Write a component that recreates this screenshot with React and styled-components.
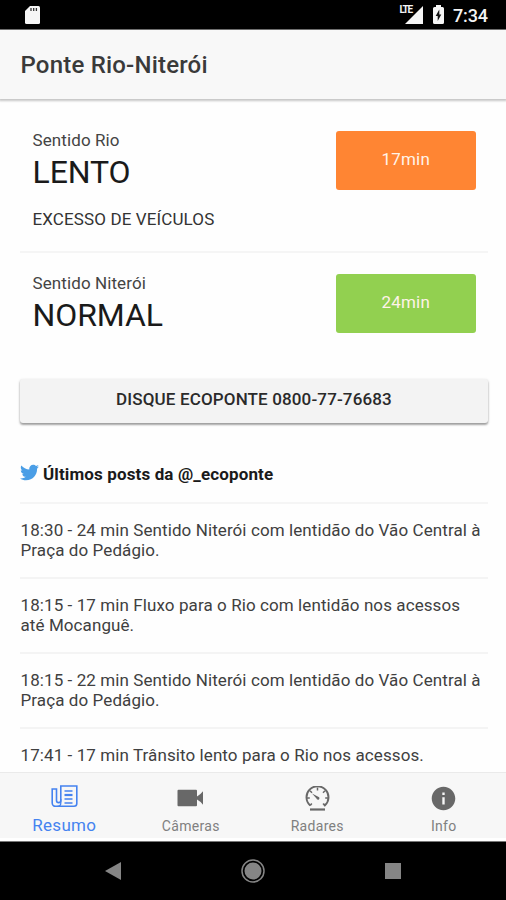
import React from 'react'
import styled, { createGlobalStyle } from 'styled-components'
import { IoMdInformationCircle } from 'react-icons/io'
import { FaTwitter } from 'react-icons/fa'

const GlobalStyle = createGlobalStyle`
  * {
    box-sizing: border-box;
  }

  body {
    margin: 0;
    background: #fefefe;
    color: #111;
    font-family: Roboto, 'Liberation Sans', sans-serif;
  }

  svg {
    display: block;
  }
`

const Screen = styled.div`
  display: flex;
  flex-direction: column;
  width: 506px;
  height: 900px;
  overflow: hidden;
`

const StatusBar = styled.div`
  flex: none;
  display: flex;
  align-items: center;
  height: 30px;
  padding: 0 18px 0 24px;
  background: #000;
  border-bottom: 1px solid #777;
  color: #f4f4f4;
`

const StatusIcons = styled.div`
  display: flex;
  align-items: center;
  margin-left: auto;
`

const Battery = styled.div`
  margin-left: 10px;
`

const Clock = styled.span`
  margin-left: 9px;
  padding-top: 3px;
  font-size: 18px;
  font-weight: 500;
  line-height: 20px;
  letter-spacing: -0.1px;
`

const Header = styled.header`
  flex: none;
  display: flex;
  align-items: center;
  height: 69px;
  padding: 0 20.5px;
  background: #f8f8f8;
  box-shadow: 0 1px 2px 1px rgba(0, 0, 0, 0.22);
`

const Title = styled.h1`
  margin: 0;
  font-size: 24px;
  font-weight: 500;
  line-height: 28px;
  color: #3a3a3a;
  letter-spacing: 0.2px;
`

const Content = styled.main`
  flex: 1;
  min-height: 0;
  overflow: hidden;
  padding: 0 18px 0 20px;
`

const Direction = styled.section`
  display: flex;
  justify-content: space-between;
  height: ${({ $height }) => $height}px;
  padding: ${({ $top }) => $top}px 12.5px 0 12.5px;
  border-bottom: ${({ $divided }) => ($divided ? '2px solid #f5f5f5' : 'none')};
`

const Label = styled.div`
  font-size: 17px;
  line-height: 20px;
  letter-spacing: 0.1px;
  color: #444;
`

const Status = styled.div`
  margin-top: 2px;
  font-size: 32px;
  line-height: 40px;
  letter-spacing: -0.1px;
  color: #1a1a1a;
`

const Reason = styled.div`
  margin-top: 17px;
  font-size: 17px;
  line-height: 20px;
  letter-spacing: 0.12px;
  color: #333;
`

const TimeBadge = styled.div`
  display: flex;
  align-items: center;
  justify-content: center;
  width: 139.5px;
  height: 59px;
  margin-top: 0.5px;
  padding-bottom: 3px;
  border-radius: 3px;
  background: ${({ $color }) => $color};
  color: #fff3e8;
  font-size: 17px;
  letter-spacing: 0.2px;
`

const CallButton = styled.button`
  display: block;
  width: 100%;
  height: 44px;
  padding: 0 0 4px;
  border: 0;
  border-radius: 3px;
  background: #f3f3f3;
  box-shadow: 0 2px 2px 0 rgba(0, 0, 0, 0.28), 0 1px 3px 0 rgba(0, 0, 0, 0.2);
  color: #2a2a2a;
  font-family: inherit;
  font-size: 17px;
  font-weight: 500;
  letter-spacing: 0.14px;
`

const PostsTitle = styled.h2`
  display: flex;
  align-items: center;
  height: 81px;
  margin: 0;
  padding-top: 23px;
  border-bottom: 2px solid #f5f5f5;
  font-size: 17px;
  font-weight: 700;
  line-height: 20px;
  letter-spacing: 0.13px;
  color: #1a1a1a;

  svg {
    margin: -3px 4px 0 0;
    color: #4a9ee6;
  }
`

const Post = styled.p`
  height: 75px;
  margin: 0;
  padding: 16px 0 0 0.5px;
  border-bottom: 2px solid #f4f4f4;
  font-size: 17px;
  line-height: 20px;
  letter-spacing: 0.09px;
  color: #404040;
`

const TabBar = styled.nav`
  flex: none;
  display: flex;
  height: 69px;
  margin-right: -1px;
  padding-left: 1px;
  background: #f7f7f7;
  border-top: 1px solid #eaeaea;
  border-bottom: 3px solid #fff;
`

const Tab = styled.div`
  flex: 1;
  display: flex;
  flex-direction: column;
  align-items: center;
  color: ${({ $active }) => ($active ? '#4583f0' : '#686868')};
`

const TabIcon = styled.div`
  display: flex;
  align-items: center;
  justify-content: center;
  height: 28px;
  margin-top: ${({ $active }) => ($active ? 9 : 11)}px;
`

const TabLabel = styled.div`
  margin-top: ${({ $active }) => ($active ? 5 : 4)}px;
  font-size: ${({ $active }) => ($active ? 17 : 14)}px;
  line-height: 20px;
  letter-spacing: 0.3px;
  color: ${({ $active }) => ($active ? '#4583f0' : '#808080')};
`

const AndroidNav = styled.div`
  flex: none;
  display: flex;
  align-items: center;
  justify-content: center;
  gap: 120px;
  height: 59px;
  background: #000;
  border-top: 1px solid #777;
`

const SdCardIcon = () => (
  <svg width="17" height="20" viewBox="0 0 17 20">
    <path d="M6 1h8.500a1.500 1.500 0 0 1 1.500 1.500v15a1.500 1.500 0 0 1-1.500 1.500h-12A1.500 1.500 0 0 1 1 17.500V6z" fill="#f6f6f6" />
    <path d="M7 3v3M9.700 3v3M12.400 3v3" stroke="#333" strokeWidth="1.300" />
  </svg>
)

const LteLabel = styled.span`
  align-self: flex-start;
  margin: 0 -7px 0 0;
  font-size: 10px;
  font-weight: 700;
  line-height: 13px;
  letter-spacing: -1.2px;
`

const SignalIcon = () => (
  <svg width="18" height="18" viewBox="0 0 18 18">
    <path d="M0 18 18 0v18z" fill="#f6f6f6" />
  </svg>
)

const BatteryIcon = () => (
  <svg width="11" height="19" viewBox="0 0 11 19">
    <path d="M3 0h5v2h1.500A1.500 1.500 0 0 1 11 3.500v14A1.500 1.500 0 0 1 9.500 19h-8A1.500 1.500 0 0 1 0 17.500v-14A1.500 1.500 0 0 1 1.500 2H3z" fill="#f6f6f6" />
    <path d="M6.300 4.500v5h2l-3.600 6.500v-5h-2z" fill="#111" />
  </svg>
)

const PaperIcon = () => (
  <svg width="27" height="23" viewBox="0 0 27 23" fill="none" stroke="currentColor">
    <path d="M9.800 1h16v17.500a2.800 2.800 0 0 1-2.800 2.800H4.500a3.300 3.300 0 0 1-3.300-3.300V4h4.300v11.500a2.100 2.100 0 0 0 4.300 0z" strokeWidth="1.600" />
    <path d="M9.800 14v4a3.300 3.300 0 0 1-3.300 3.300" strokeWidth="1.300" />
    <path d="M13.500 6h8M13.500 14h8M13.500 18h8" strokeWidth="1.500" />
    <path d="M13.500 10h8" strokeWidth="2.200" />
  </svg>
)

const CameraIcon = () => (
  <svg width="27" height="18" viewBox="0 0 27 18">
    <path d="M1.500 0.800h17.500a1 1 0 0 1 1 1v5.700q3-1.500 6-5.300v13.600q-3-3.800-6-5.300v5.700a1 1 0 0 1-1 1h-17.500a1 1 0 0 1-1-1V1.800a1 1 0 0 1 1-1z" fill="currentColor" />
  </svg>
)

const GaugeIcon = () => (
  <svg width="25" height="25" viewBox="0 0 25 25" fill="none" stroke="currentColor">
    <path d="M5.200 19.500a11 11 0 1 1 14.600 0l-1.600-2" strokeWidth="1.900" />
    <path d="M5.200 19.500l1.600-2M2 12h2.800M20.200 12H23M12.500 1.500v3M5 4.700l2 2M20 4.700l-2 2" strokeWidth="1.500" />
    <path d="M7 7.500l6.700 3.400a1.500 1.500 0 1 1-2.200 1.700z" fill="currentColor" stroke="none" />
    <path d="M5 23.500h15" strokeWidth="2.200" />
  </svg>
)

const posts = [
  '18:30 - 24 min Sentido Niterói com lentidão do Vão Central à Praça do Pedágio.',
  '18:15 - 17 min Fluxo para o Rio com lentidão nos acessos até Mocanguê.',
  '18:15 - 22 min Sentido Niterói com lentidão do Vão Central à Praça do Pedágio.',
  '17:41 - 17 min Trânsito lento para o Rio nos acessos.',
]

const tabs = [
  { label: 'Resumo', icon: <PaperIcon />, active: true },
  { label: 'Câmeras', icon: <CameraIcon /> },
  { label: 'Radares', icon: <GaugeIcon /> },
  { label: 'Info', icon: <IoMdInformationCircle size={29} /> },
]

const App = () => {
  return (
    <>
      <GlobalStyle />
      <Screen>
        <StatusBar>
          <SdCardIcon />
          <StatusIcons>
            <LteLabel>LTE</LteLabel>
            <SignalIcon />
            <Battery>
              <BatteryIcon />
            </Battery>
            <Clock>7:34</Clock>
          </StatusIcons>
        </StatusBar>
        <Header>
          <Title>Ponte Rio-Niterói</Title>
        </Header>
        <Content>
          <Direction $height={154} $top={31} $divided>
            <div>
              <Label>Sentido Rio</Label>
              <Status>LENTO</Status>
              <Reason>EXCESSO DE VEÍCULOS</Reason>
            </div>
            <TimeBadge $color="#ff8533">17min</TimeBadge>
          </Direction>
          <Direction $height={126} $top={20}>
            <div>
              <Label>Sentido Niterói</Label>
              <Status>NORMAL</Status>
            </div>
            <TimeBadge $color="#92d050">24min</TimeBadge>
          </Direction>
          <CallButton>DISQUE ECOPONTE 0800-77-76683</CallButton>
          <PostsTitle>
            <FaTwitter size={19} />
            Últimos posts da @_ecoponte
          </PostsTitle>
          {posts.map((post, i) => (
            <Post key={i}>{post}</Post>
          ))}
        </Content>
        <TabBar>
          {tabs.map(({ label, icon, active }) => (
            <Tab key={label} $active={active}>
              <TabIcon $active={active}>{icon}</TabIcon>
              <TabLabel $active={active}>{label}</TabLabel>
            </Tab>
          ))}
        </TabBar>
        <AndroidNav>
          <svg width="16" height="18" viewBox="0 0 16 18">
            <path d="M0 9 16 0v18z" fill="#858585" />
          </svg>
          <svg width="24" height="24" viewBox="0 0 24 24">
            <circle cx="12" cy="12" r="11" fill="none" stroke="#858585" strokeWidth="1.500" />
            <circle cx="12" cy="12" r="8.500" fill="#858585" />
          </svg>
          <svg width="16" height="16" viewBox="0 0 16 16">
            <path d="M0 0h16v16H0z" fill="#858585" />
          </svg>
        </AndroidNav>
      </Screen>
    </>
  )
}
export default App
